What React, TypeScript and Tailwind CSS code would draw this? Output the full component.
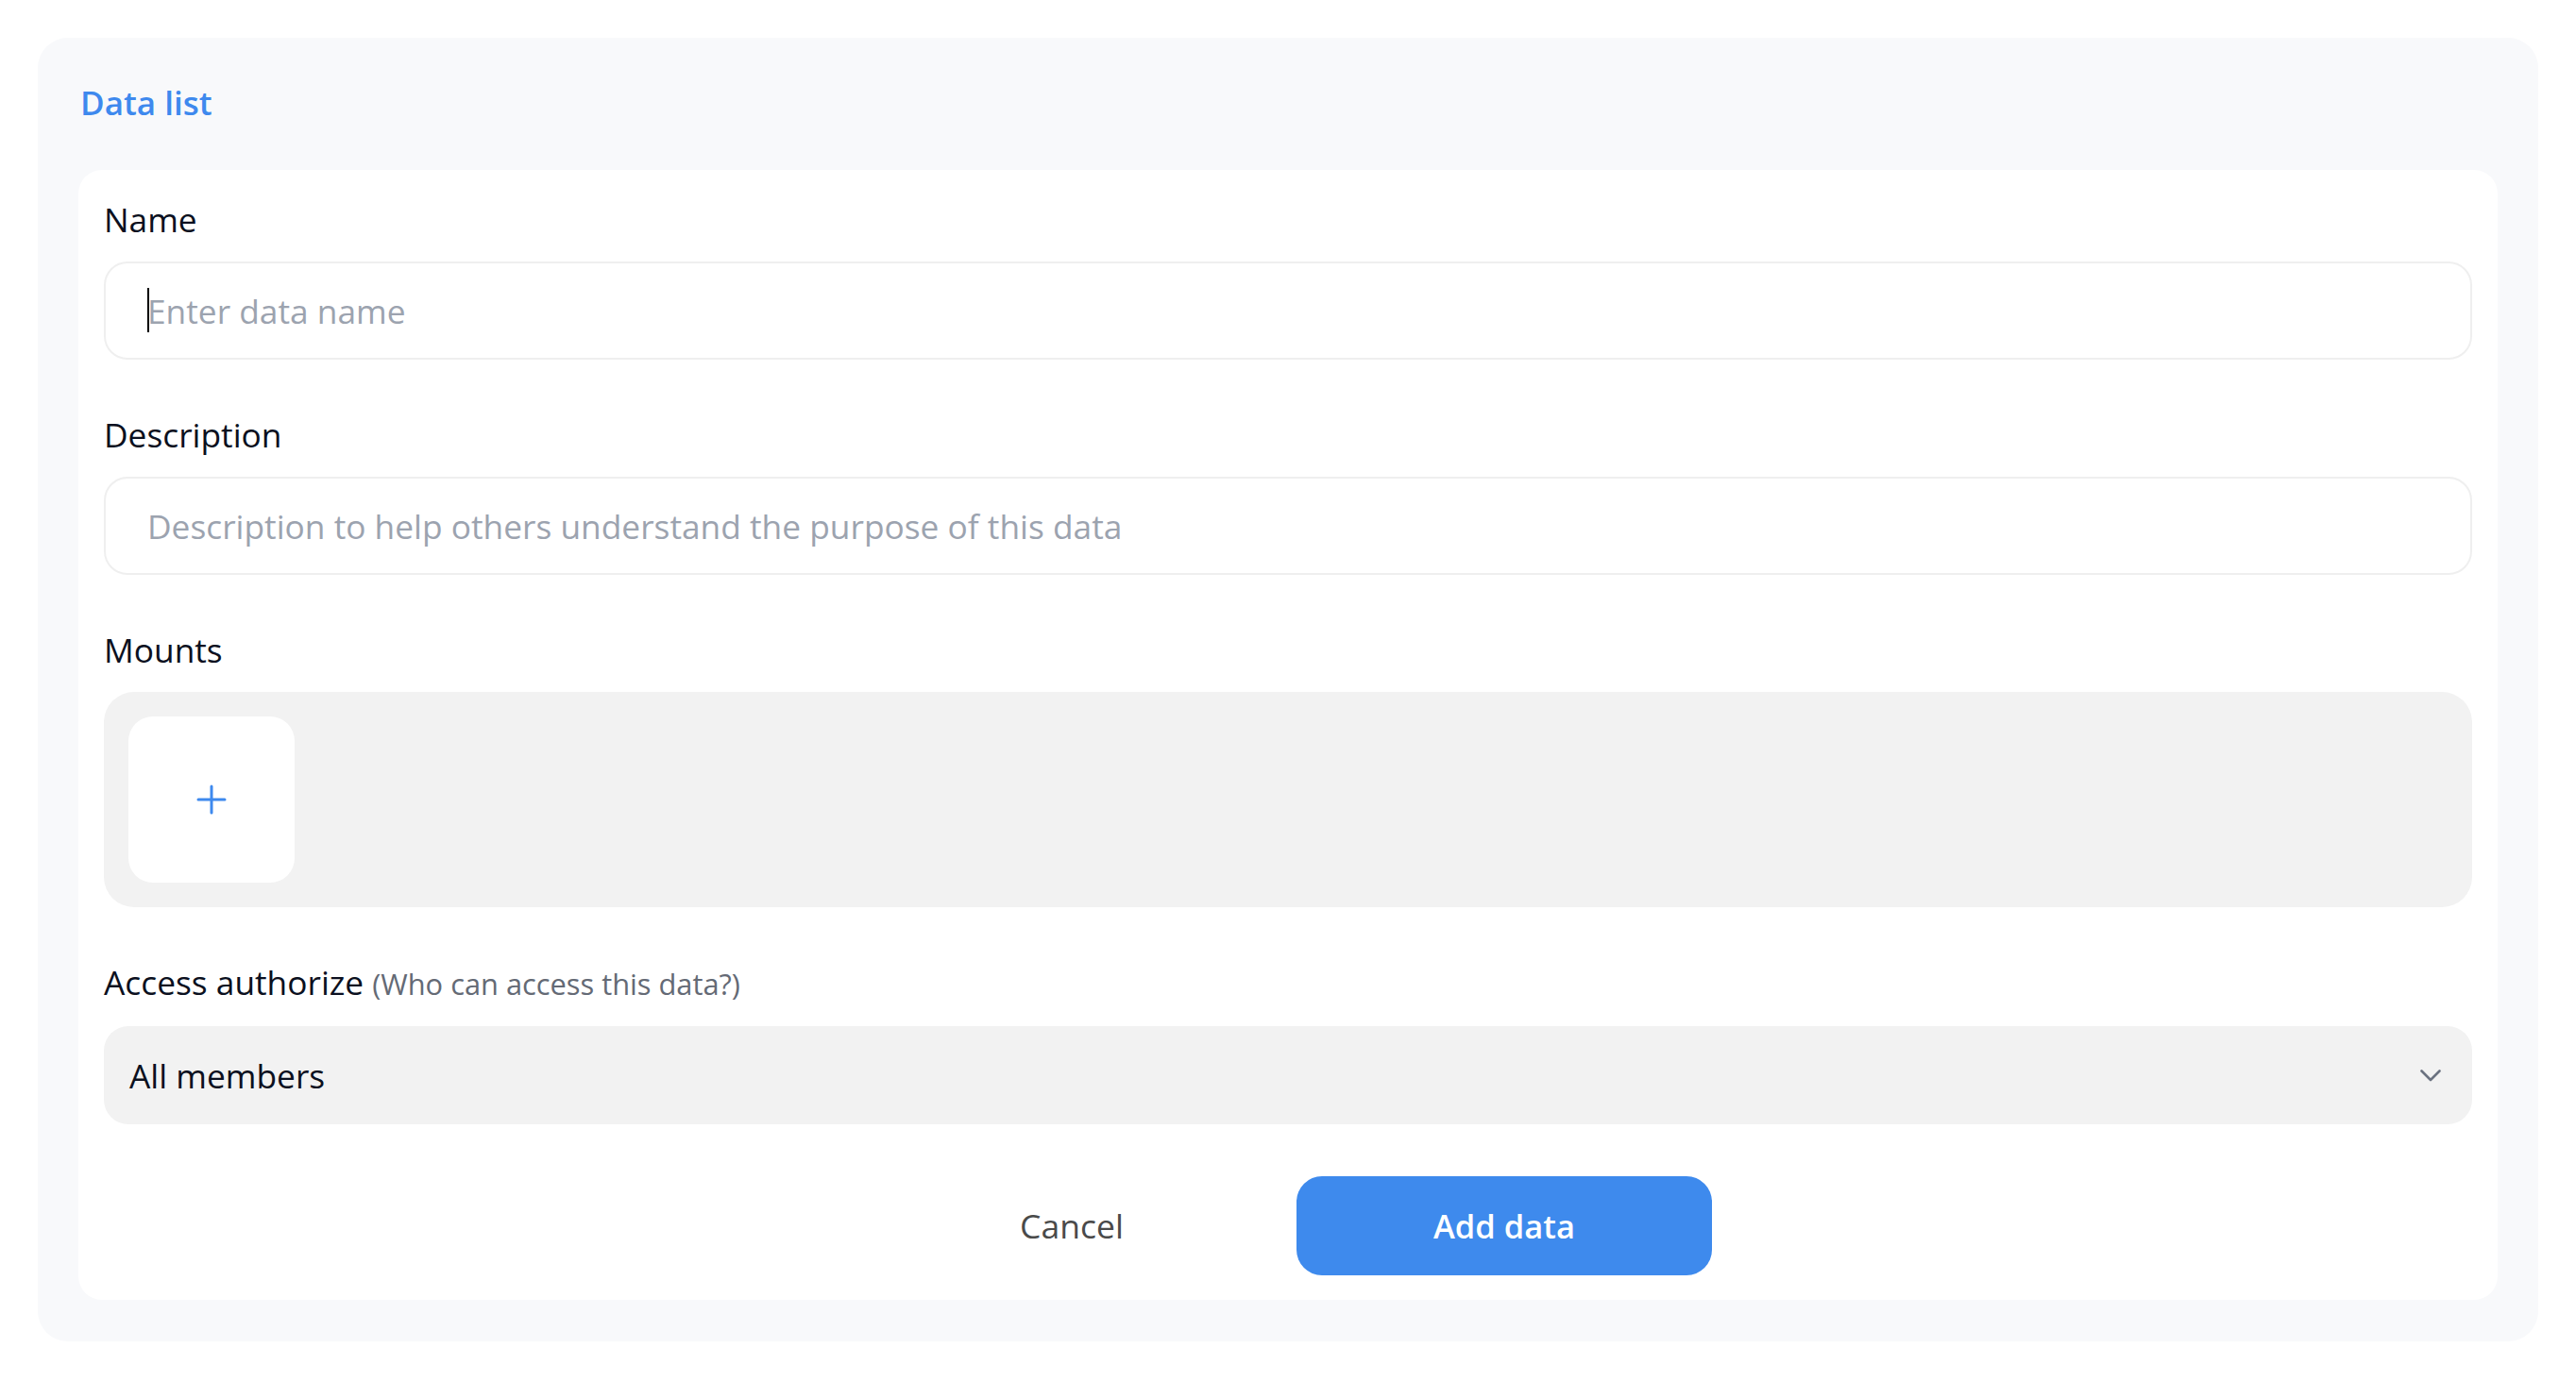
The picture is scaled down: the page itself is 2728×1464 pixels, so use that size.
import React from "react";

function Label({ children }: { children: React.ReactNode }) {
  return (
    <div className="text-[35.3px] leading-[54px] text-[#0b1020]">{children}</div>
  );
}

function TextField({ placeholder, caret }: { placeholder: string; caret?: boolean }) {
  return (
    <div className="h-[104px] rounded-[25px] border-2 border-[#efefef] bg-white pl-[44px] pr-[44px] flex items-center">
      <div className="relative text-[35.3px] leading-[54px] text-[#9ca3af] whitespace-nowrap">
        {caret && (
          <span className="absolute left-0 top-[3px] h-[47px] w-[2px] bg-black" />
        )}
        {placeholder}
      </div>
    </div>
  );
}

export default function App() {
  return (
    <div className="w-[2728px] h-[1464px] bg-white pt-[40px] pl-[40px] font-['Open_Sans',sans-serif]">
      <div className="w-[2648px] rounded-[32px] bg-[#f8f9fb] pt-[42px] px-[43px] pb-[44px]">
        <div className="pl-[2px] text-[35px] leading-[54px] font-semibold text-[#3e89ee] mb-[44px]">
          Data list
        </div>
        <div className="rounded-[25px] bg-white px-[27px] pt-[25px] pb-[26px] flex flex-col">
          <div className="flex flex-col gap-[18px]">
            <Label>Name</Label>
            <TextField placeholder="Enter data name" caret />
          </div>
          <div className="flex flex-col gap-[18px] mt-[52px]">
            <Label>Description</Label>
            <TextField placeholder="Description to help others understand the purpose of this data" />
          </div>
          <div className="flex flex-col gap-[18px] mt-[52px]">
            <Label>Mounts</Label>
            <div className="rounded-[32px] bg-[#f2f2f2] p-[26px] flex gap-[26px]">
              <button className="w-[176px] h-[176px] rounded-[26px] bg-white flex items-center justify-center">
                <svg width="32" height="32" viewBox="0 0 32 32" fill="none">
                  <line x1="16" y1="2" x2="16" y2="30" stroke="#3e89ee" strokeWidth="3" strokeLinecap="round" />
                  <line x1="2" y1="16" x2="30" y2="16" stroke="#3e89ee" strokeWidth="3" strokeLinecap="round" />
                </svg>
              </button>
            </div>
          </div>
          <div className="flex flex-col gap-[18px] mt-[52px]">
            <div className="flex items-baseline gap-[9px] leading-[54px]">
              <span className="text-[35.3px] text-[#0b1020]">Access authorize</span>
              <span className="text-[30.8px] text-[#646a75]">(Who can access this data?)</span>
            </div>
            <div className="h-[104px] rounded-[26px] bg-[#f2f2f2] pl-[27px] pr-[33px] flex items-center justify-between">
              <span className="text-[35.3px] leading-[54px] text-[#0b1020]">All members</span>
              <svg width="22" height="13" viewBox="0 0 22 13" fill="none">
                <polyline points="1.5,1.5 11,11 20.5,1.5" stroke="#6b7280" strokeWidth="2.6" strokeLinecap="round" strokeLinejoin="round" />
              </svg>
            </div>
          </div>
          <div className="mt-[55px] flex justify-center gap-[18px]">
            <button className="w-[440px] h-[105px] rounded-[27px] text-[35.5px] text-[#4a4a4a]">
              Cancel
            </button>
            <button className="w-[440px] h-[105px] rounded-[27px] bg-[#3e8aed] text-[34.5px] font-semibold text-white">
              Add data
            </button>
          </div>
        </div>
      </div>
    </div>
  );
}
